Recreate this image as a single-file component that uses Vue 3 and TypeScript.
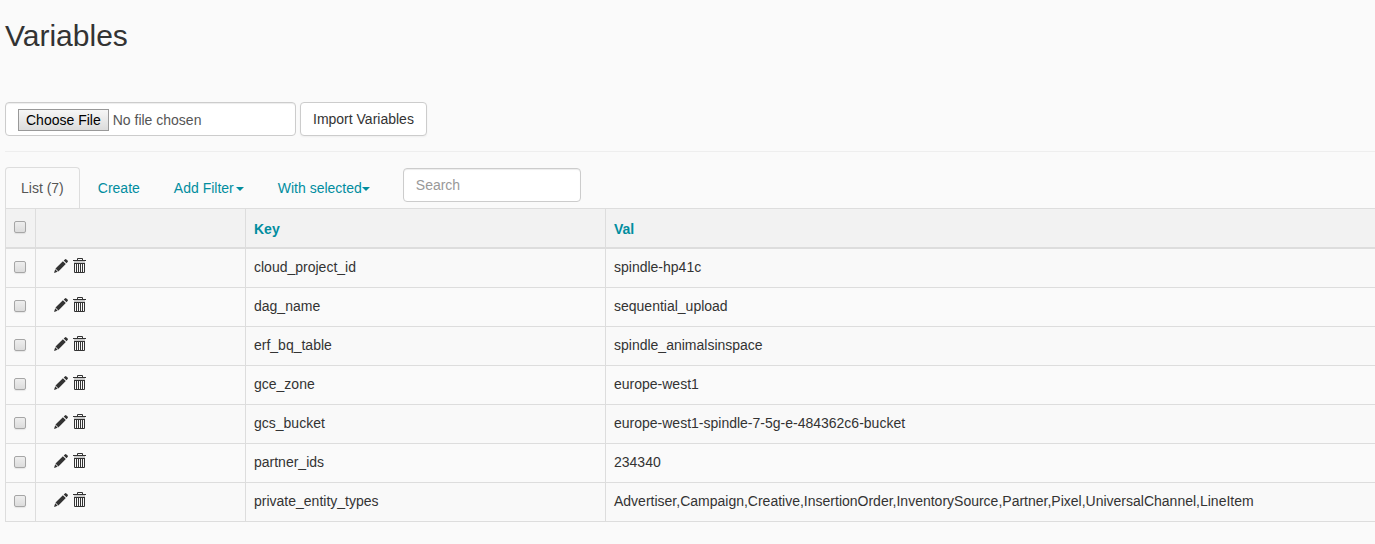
<script setup lang="ts">
import { ref, computed } from 'vue'

interface Variable {
  key: string
  val: string
}

const variables: Variable[] = [
  { key: 'cloud_project_id', val: 'spindle-hp41c' },
  { key: 'dag_name', val: 'sequential_upload' },
  { key: 'erf_bq_table', val: 'spindle_animalsinspace' },
  { key: 'gce_zone', val: 'europe-west1' },
  { key: 'gcs_bucket', val: 'europe-west1-spindle-7-5g-e-484362c6-bucket' },
  { key: 'partner_ids', val: '234340' },
  {
    key: 'private_entity_types',
    val: 'Advertiser,Campaign,Creative,InsertionOrder,InventorySource,Partner,Pixel,UniversalChannel,LineItem',
  },
]

const search = ref('')
const selected = ref<string[]>([])
const allSelected = computed<boolean>({
  get: () => selected.value.length === variables.length,
  set: (on) => {
    selected.value = on ? variables.map((v) => v.key) : []
  },
})
</script>

<template>
  <main class="page">
    <h2 class="title">Variables</h2>

    <form class="import" @submit.prevent>
      <input class="control file" type="file" aria-label="Variables file" />
      <button class="btn" type="submit">Import Variables</button>
    </form>
    <hr class="rule" />

    <ul class="tabs">
      <li><a class="tab active" href="#list">List ({{ variables.length }})</a></li>
      <li><a class="tab" href="#create">Create</a></li>
      <li><a class="tab spaced" href="#filter">Add Filter<b class="caret"></b></a></li>
      <li><a class="tab" href="#selected">With selected<b class="caret"></b></a></li>
      <li class="search">
        <input v-model="search" class="control" type="text" placeholder="Search" aria-label="Search" />
      </li>
    </ul>

    <table class="grid">
      <thead>
        <tr>
          <th class="check"><input v-model="allSelected" type="checkbox" aria-label="Select all records" /></th>
          <th class="actions"></th>
          <th class="key"><a href="#key">Key</a></th>
          <th><a href="#val">Val</a></th>
        </tr>
      </thead>
      <tbody>
        <tr v-for="v in variables" :key="v.key">
          <td class="check">
            <input v-model="selected" type="checkbox" :value="v.key" :aria-label="'Select ' + v.key" />
          </td>
          <td class="actions">
            <div class="icons">
              <a href="#edit" :aria-label="'Edit ' + v.key">
                <svg width="14" height="14" viewBox="0 0 14 14">
                  <path d="M0 14 1.2 10.3 3.7 12.8Z M1.5 9.6 8.9 2.2 11.8 5.1 4.4 12.5Z M9.7 1.5 10.9 .4Q11.7-.2 12.4 .4L13.6 1.6Q14.2 2.3 13.6 3.1L12.5 4.3Z" />
                </svg>
              </a>
              <button type="button" :aria-label="'Delete ' + v.key">
                <svg width="14" height="16" viewBox="0 0 14 16">
                  <path fill-rule="evenodd" d="M4 2V1Q4 0 5 0H9Q10 0 10 1V2H13V3H0V2ZM5 2H9V1H5Z" />
                  <path class="lid" d="M1 3H12V5H1Z" />
                  <path fill-rule="evenodd" d="M1 5H12V14Q12 15 11 15H2Q1 15 1 14ZM2 6V14H3V6ZM4 6V14H5V6ZM6 6V14H7V6ZM8 6V14H9V6ZM10 6V14H11V6Z" />
                </svg>
              </button>
            </div>
          </td>
          <td>{{ v.key }}</td>
          <td>{{ v.val }}</td>
        </tr>
      </tbody>
    </table>
  </main>
</template>

<style>
body {
  background: #fafafa;
}
</style>

<style scoped>
.page,
.page * {
  box-sizing: border-box;
}
.page {
  padding: 19px 0 22px 5px;
  color: #333;
  font: 14px/20px "Liberation Sans", Arial, sans-serif;
}
.title {
  margin: 0 0 50px;
  font-size: 30px;
  font-weight: 400;
  line-height: 33px;
}
.import {
  display: flex;
  gap: 4px;
}
.control {
  display: block;
  height: 34px;
  padding: 6px 12px;
  border: 1px solid #ccc;
  border-radius: 4px;
  background: #fff;
  box-shadow: inset 0 1px 1px rgba(0, 0, 0, 0.075);
  color: #555;
  font: inherit;
  outline: 0;
}
.control::placeholder {
  color: #999;
}
.file {
  width: 291px;
}
.file::file-selector-button {
  height: 22px;
  margin: 0 4px 0 0;
  padding: 0 7px;
  border: 1px solid #999;
  border-radius: 0;
  background: linear-gradient(#f6f6f6, #dcdcdc);
  color: #000;
  font: inherit;
}
.btn {
  height: 34px;
  padding: 0 12px;
  border: 1px solid #ccc;
  border-radius: 4px;
  background: #fff;
  box-shadow: 0 1px 2px rgba(0, 0, 0, 0.05);
  color: #333;
  font: inherit;
}
.rule {
  margin: 15px 0;
  border: 0;
  border-top: 1px solid #eee;
}
.tabs {
  display: flex;
  gap: 2px;
  margin: 0 0 -1px;
  padding: 0;
  list-style: none;
}
.tab {
  display: flex;
  align-items: center;
  position: relative;
  padding: 10px 15px;
  border: 1px solid transparent;
  border-radius: 4px 4px 0 0;
  color: #018d9f;
  text-decoration: none;
}
.tab.active {
  border-color: #ddd #ddd transparent;
  color: #555;
}
.tab.spaced {
  gap: 2px;
}
.caret {
  border: 4px solid transparent;
  border-top-color: currentColor;
  border-bottom: 0;
  margin-top: 2px;
}
.search {
  padding: 1px 0 0 15px;
}
.search .control {
  width: 178px;
}
.grid {
  width: 100%;
  border-collapse: separate;
  border-spacing: 0;
  border-left: 1px solid #ddd;
  table-layout: fixed;
}
th,
td {
  height: 39px;
  padding: 8px 8px 0;
  border-right: 1px solid #ddd;
  border-bottom: 1px solid #ddd;
  text-align: left;
  vertical-align: top;
  white-space: nowrap;
}
th {
  height: 41px;
  padding-top: 10px;
  border-top: 1px solid #ddd;
  border-bottom-width: 2px;
  background: #f2f2f2;
}
th:last-child,
td:last-child {
  border-right: 0;
}
tbody tr:nth-child(odd) {
  background: #f9f9f9;
}
th a {
  color: #018d9f;
  text-decoration: none;
}
.check {
  width: 30px;
  padding-top: 12px;
}
.actions {
  width: 210px;
}
.key {
  width: 360px;
}
.check input {
  appearance: none;
  display: block;
  width: 12px;
  height: 12px;
  margin: 0;
  border: 1px solid #a6a6a6;
  border-radius: 2px;
  background: linear-gradient(#eee, #dcdcdc);
  box-shadow: 0 1px 1px rgba(0, 0, 0, 0.08);
}
.check input:checked {
  background: #018d9f;
}
.icons {
  display: flex;
  align-items: center;
  gap: 5px;
  padding: 1px 0 0 10px;
}
.icons a,
.icons button {
  display: block;
  padding: 0;
  border: 0;
  background: none;
  color: #333;
}
.icons svg {
  display: block;
  fill: #333;
}
.icons .lid {
  fill: #ccc;
}
</style>
